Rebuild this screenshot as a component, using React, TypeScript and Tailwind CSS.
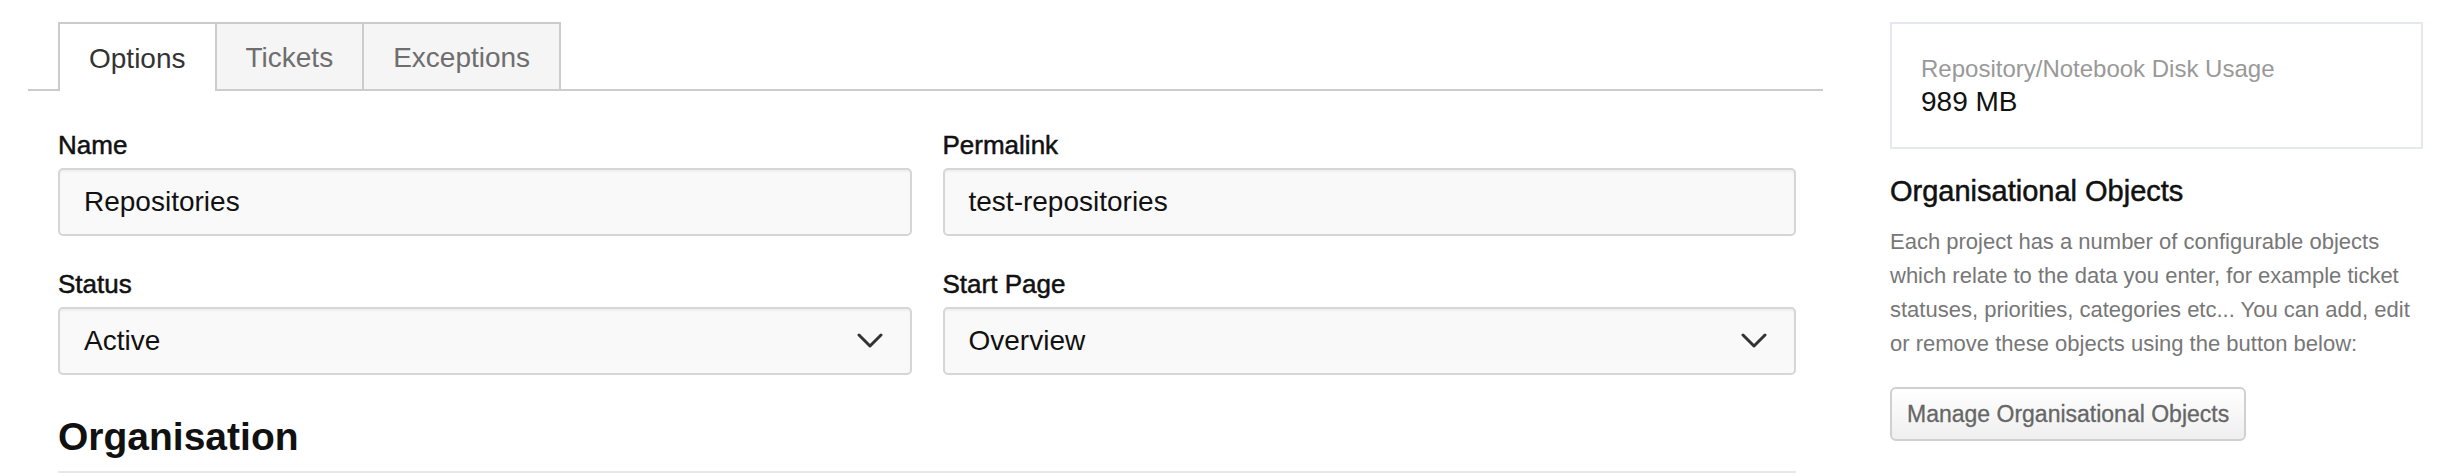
import React from "react";

function Chevron() {
  return (
    <svg width="26" height="16" viewBox="0 0 26 16" fill="none" className="shrink-0">
      <polyline points="2,2 13,13 24,2" stroke="#333" strokeWidth="3" strokeLinecap="round" strokeLinejoin="round" />
    </svg>
  );
}

function Field({ label, children }: { label: string; children: React.ReactNode }) {
  return (
    <div className="flex flex-col">
      <label className="text-[26px] leading-[31px] text-[#111] [-webkit-text-stroke:0.5px_#111] mb-[7px]">{label}</label>
      {children}
    </div>
  );
}

function TextBox({ value }: { value: string }) {
  return (
    <div className="h-[68px] rounded-[5px] border-2 border-[#d6d6d6] bg-[#f9f9f9] shadow-[inset_0_2px_2px_rgba(0,0,0,0.04)] flex items-center px-[24px] text-[28px] text-[#111]">
      {value}
    </div>
  );
}

function SelectBox({ value }: { value: string }) {
  return (
    <div className="h-[68px] rounded-[5px] border-2 border-[#d6d6d6] bg-[#f9f9f9] shadow-[inset_0_2px_2px_rgba(0,0,0,0.04)] flex items-center justify-between pl-[24px] pr-[27px] text-[28px] text-[#111]">
      <span>{value}</span>
      <Chevron />
    </div>
  );
}

export default function App() {
  return (
    <div className="w-[2462px] h-[476px] bg-white flex font-['Liberation_Sans',Arial,Helvetica,sans-serif] overflow-hidden">
      <main className="ml-[28px] w-[1795px] shrink-0">
        <div className="mt-[22px] flex border-b-2 border-[#cccccc] pl-[30px]">
          <div className="h-[69px] -mb-[2px] px-[29px] pt-[3px] flex items-center border-2 border-b-0 border-[#cccccc] bg-white text-[28px] text-[#333]">
            Options
          </div>
          <div className="h-[67px] px-[29px] pt-[3px] flex items-center border-2 border-l-0 border-b-0 border-[#cccccc] bg-[#f5f5f5] text-[28px] text-[#6e6e6e]">
            Tickets
          </div>
          <div className="h-[67px] px-[29px] pt-[3px] flex items-center border-2 border-l-0 border-b-0 border-[#cccccc] bg-[#f5f5f5] text-[28px] text-[#6e6e6e]">
            Exceptions
          </div>
        </div>

        <div className="pl-[30px] pr-[27px] pt-[39px]">
          <div className="grid grid-cols-2 gap-x-[31px] gap-y-[33px]">
            <Field label="Name">
              <TextBox value="Repositories" />
            </Field>
            <Field label="Permalink">
              <TextBox value="test-repositories" />
            </Field>
            <Field label="Status">
              <SelectBox value="Active" />
            </Field>
            <Field label="Start Page">
              <SelectBox value="Overview" />
            </Field>
          </div>

          <h2 className="mt-[39px] pb-[11px] border-b-2 border-[#e8e8e8] text-[39px] leading-[46px] font-bold text-[#111]">
            Organisation
          </h2>
        </div>
      </main>

      <aside className="ml-[67px] w-[533px] shrink-0 pt-[22px]">
        <div className="border-2 border-[#e5e9ed] pl-[29px] pt-[30px] pb-[28px]">
          <div className="text-[24px] leading-[29px] text-[#999]">Repository/Notebook Disk Usage</div>
          <div className="mt-[2px] text-[28px] leading-[34px] text-[#111]">989 MB</div>
        </div>

        <h3 className="mt-[24px] text-[29px] leading-[36px] text-[#111] [-webkit-text-stroke:0.5px_#111]">Organisational Objects</h3>
        <p className="mt-[16px] text-[22px] leading-[34px] text-[#777]">
          Each project has a number of configurable objects which relate to the data you enter, for example ticket statuses, priorities, categories etc... You can add, edit or remove these objects using the button below:
        </p>
        <button className="mt-[26px] h-[54px] px-[15px] rounded-[6px] border-2 border-[#d0d0d0] bg-gradient-to-b from-white to-[#efefef] text-[23px] text-[#666] [-webkit-text-stroke:0.3px_#666]">
          Manage Organisational Objects
        </button>
      </aside>
    </div>
  );
}
